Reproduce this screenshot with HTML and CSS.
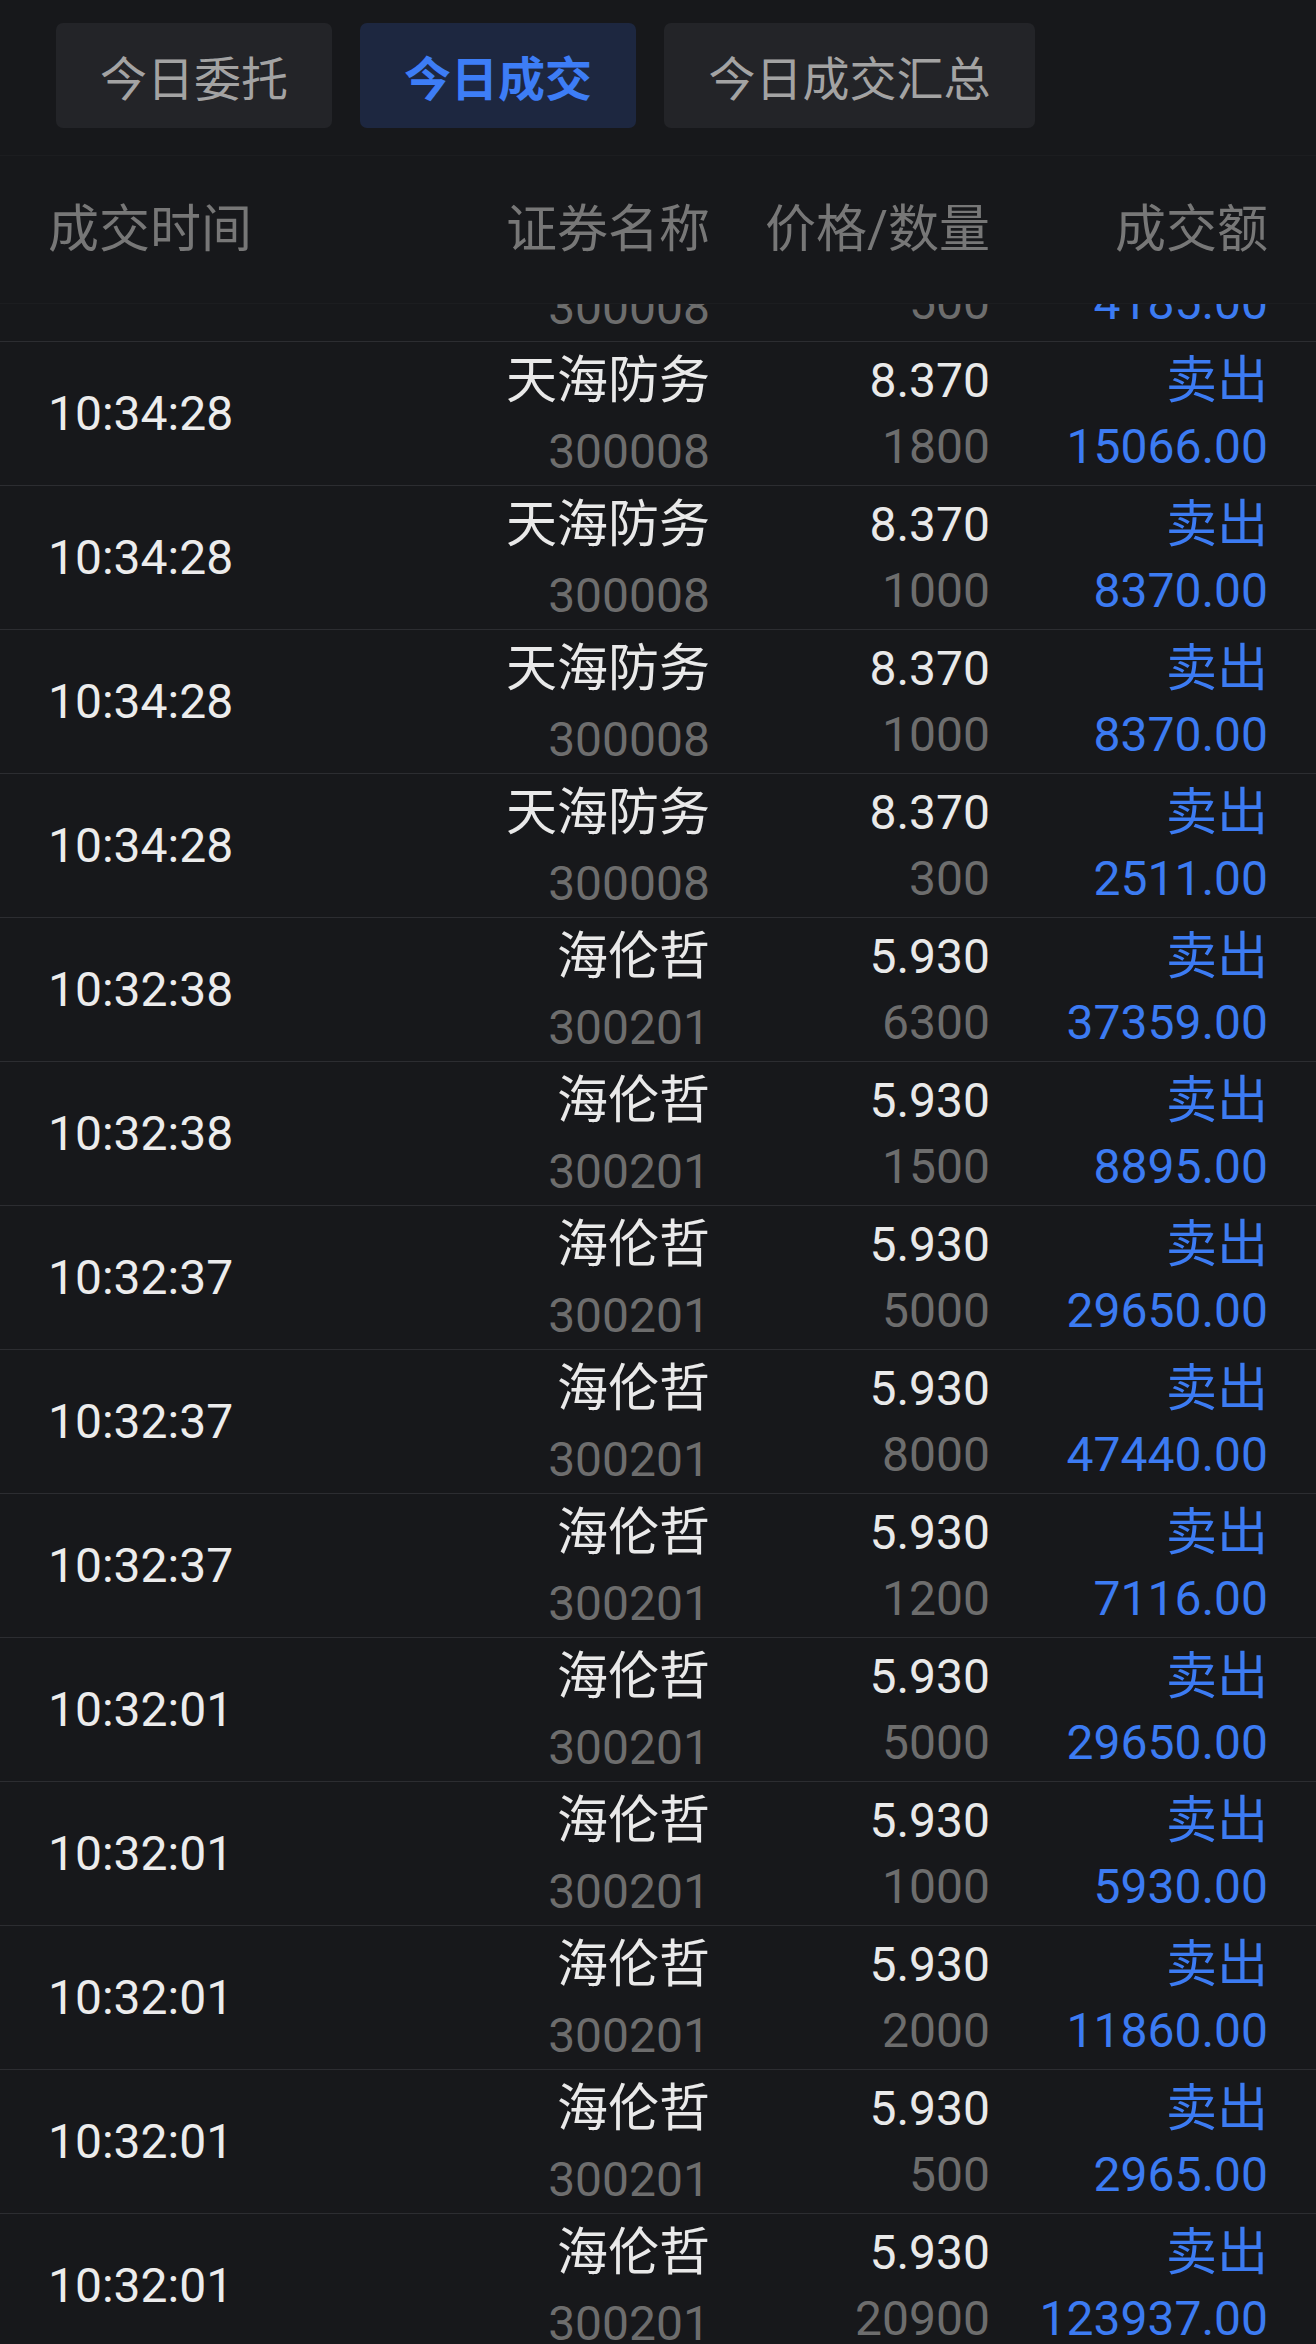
FILE: index.html
```html
<!DOCTYPE html>
<html lang="zh-CN">
<head>
<meta charset="utf-8">
<title>今日成交</title>
<link rel="stylesheet" href="styles.css">
</head>
<body>
<div class="page">
  <div class="tabbar">
    <div class="tab">今日委托</div>
    <div class="tab active">今日成交</div>
    <div class="tab">今日成交汇总</div>
  </div>
  <div class="thead">
    <div class="th left">成交时间</div>
    <div class="th">证券名称</div>
    <div class="th">价格/数量</div>
    <div class="th">成交额</div>
  </div>
  <div class="listwrap">
    <div class="list">
      <div class="row">
        <div class="time"></div>
        <div class="cell"><div class="l1 cn"></div><div class="l2 code">300008</div></div>
        <div class="cell"><div class="l1"></div><div class="l2 sub">500</div></div>
        <div class="cell"><div class="l1 cn blue"></div><div class="l2 blue">4185.00</div></div>
      </div>
      <div class="row">
        <div class="time">10:34:28</div>
        <div class="cell"><div class="l1 cn">天海防务</div><div class="l2 code">300008</div></div>
        <div class="cell"><div class="l1">8.370</div><div class="l2 sub">1800</div></div>
        <div class="cell"><div class="l1 cn blue">卖出</div><div class="l2 blue">15066.00</div></div>
      </div>
      <div class="row">
        <div class="time">10:34:28</div>
        <div class="cell"><div class="l1 cn">天海防务</div><div class="l2 code">300008</div></div>
        <div class="cell"><div class="l1">8.370</div><div class="l2 sub">1000</div></div>
        <div class="cell"><div class="l1 cn blue">卖出</div><div class="l2 blue">8370.00</div></div>
      </div>
      <div class="row">
        <div class="time">10:34:28</div>
        <div class="cell"><div class="l1 cn">天海防务</div><div class="l2 code">300008</div></div>
        <div class="cell"><div class="l1">8.370</div><div class="l2 sub">1000</div></div>
        <div class="cell"><div class="l1 cn blue">卖出</div><div class="l2 blue">8370.00</div></div>
      </div>
      <div class="row">
        <div class="time">10:34:28</div>
        <div class="cell"><div class="l1 cn">天海防务</div><div class="l2 code">300008</div></div>
        <div class="cell"><div class="l1">8.370</div><div class="l2 sub">300</div></div>
        <div class="cell"><div class="l1 cn blue">卖出</div><div class="l2 blue">2511.00</div></div>
      </div>
      <div class="row">
        <div class="time">10:32:38</div>
        <div class="cell"><div class="l1 cn">海伦哲</div><div class="l2 code">300201</div></div>
        <div class="cell"><div class="l1">5.930</div><div class="l2 sub">6300</div></div>
        <div class="cell"><div class="l1 cn blue">卖出</div><div class="l2 blue">37359.00</div></div>
      </div>
      <div class="row">
        <div class="time">10:32:38</div>
        <div class="cell"><div class="l1 cn">海伦哲</div><div class="l2 code">300201</div></div>
        <div class="cell"><div class="l1">5.930</div><div class="l2 sub">1500</div></div>
        <div class="cell"><div class="l1 cn blue">卖出</div><div class="l2 blue">8895.00</div></div>
      </div>
      <div class="row">
        <div class="time">10:32:37</div>
        <div class="cell"><div class="l1 cn">海伦哲</div><div class="l2 code">300201</div></div>
        <div class="cell"><div class="l1">5.930</div><div class="l2 sub">5000</div></div>
        <div class="cell"><div class="l1 cn blue">卖出</div><div class="l2 blue">29650.00</div></div>
      </div>
      <div class="row">
        <div class="time">10:32:37</div>
        <div class="cell"><div class="l1 cn">海伦哲</div><div class="l2 code">300201</div></div>
        <div class="cell"><div class="l1">5.930</div><div class="l2 sub">8000</div></div>
        <div class="cell"><div class="l1 cn blue">卖出</div><div class="l2 blue">47440.00</div></div>
      </div>
      <div class="row">
        <div class="time">10:32:37</div>
        <div class="cell"><div class="l1 cn">海伦哲</div><div class="l2 code">300201</div></div>
        <div class="cell"><div class="l1">5.930</div><div class="l2 sub">1200</div></div>
        <div class="cell"><div class="l1 cn blue">卖出</div><div class="l2 blue">7116.00</div></div>
      </div>
      <div class="row">
        <div class="time">10:32:01</div>
        <div class="cell"><div class="l1 cn">海伦哲</div><div class="l2 code">300201</div></div>
        <div class="cell"><div class="l1">5.930</div><div class="l2 sub">5000</div></div>
        <div class="cell"><div class="l1 cn blue">卖出</div><div class="l2 blue">29650.00</div></div>
      </div>
      <div class="row">
        <div class="time">10:32:01</div>
        <div class="cell"><div class="l1 cn">海伦哲</div><div class="l2 code">300201</div></div>
        <div class="cell"><div class="l1">5.930</div><div class="l2 sub">1000</div></div>
        <div class="cell"><div class="l1 cn blue">卖出</div><div class="l2 blue">5930.00</div></div>
      </div>
      <div class="row">
        <div class="time">10:32:01</div>
        <div class="cell"><div class="l1 cn">海伦哲</div><div class="l2 code">300201</div></div>
        <div class="cell"><div class="l1">5.930</div><div class="l2 sub">2000</div></div>
        <div class="cell"><div class="l1 cn blue">卖出</div><div class="l2 blue">11860.00</div></div>
      </div>
      <div class="row">
        <div class="time">10:32:01</div>
        <div class="cell"><div class="l1 cn">海伦哲</div><div class="l2 code">300201</div></div>
        <div class="cell"><div class="l1">5.930</div><div class="l2 sub">500</div></div>
        <div class="cell"><div class="l1 cn blue">卖出</div><div class="l2 blue">2965.00</div></div>
      </div>
      <div class="row">
        <div class="time">10:32:01</div>
        <div class="cell"><div class="l1 cn">海伦哲</div><div class="l2 code">300201</div></div>
        <div class="cell"><div class="l1">5.930</div><div class="l2 sub">20900</div></div>
        <div class="cell"><div class="l1 cn blue">卖出</div><div class="l2 blue">123937.00</div></div>
      </div>
    </div>
  </div>
</div>
</body>
</html>
```

FILE: styles.css
```css
html, body {
  margin: 0;
  padding: 0;
  background: #17181b;
  height: 2344px;
  overflow: hidden;
}

.page {
  font-family: Roboto, "Noto Sans CJK SC", sans-serif;
  color: #e9e9e9;
  background: #17181b;
  width: 1316px;
}

.tabbar {
  display: flex;
  gap: 28px;
  padding: 23px 56px 0;
  height: 156px;
  box-sizing: border-box;
  border-bottom: 1px solid #1c1d20;
}

.tab {
  height: 105px;
  padding: 0 44px;
  display: flex;
  align-items: center;
  justify-content: center;
  background: #232428;
  border-radius: 7px;
  font-size: 47px;
  color: #a3a3a3;
  box-sizing: border-box;
  width: 276px;
}

.tab:last-child {
  width: 371px;
}

.tab.active {
  background: #1d2740;
  color: #3d7df6;
  font-weight: 700;
}

.thead {
  display: grid;
  grid-template-columns: 1fr 380px 280px 278px;
  padding: 0 48px;
  height: 148px;
  box-sizing: border-box;
  align-items: center;
  border-bottom: 1px solid #1c1d20;
}

.th {
  font-size: 51px;
  color: #777777;
  text-align: right;
  line-height: 70px;
}

.th.left {
  text-align: left;
}

.listwrap {
  height: 2040px;
  overflow: hidden;
}

.list {
  margin-top: -106px;
}

.row {
  display: grid;
  grid-template-columns: 1fr 380px 280px 278px;
  padding: 0 48px;
  height: 144px;
  box-sizing: border-box;
  border-bottom: 1px solid #2c2d31;
}

.time {
  font-size: 48px;
  line-height: 143px;
  color: #ececec;
}

.cell {
  padding-top: 6px;
  text-align: right;
}

.l1 {
  font-size: 48px;
  line-height: 66px;
  height: 66px;
}

.l1.cn {
  font-size: 51px;
}

.l2 {
  font-size: 48px;
  line-height: 66px;
  height: 66px;
}

.code {
  color: #6d6d6d;
  margin-top: 5px;
}

.sub {
  color: #6d6d6d;
}

.blue {
  color: #3c7bf2;
}
```
